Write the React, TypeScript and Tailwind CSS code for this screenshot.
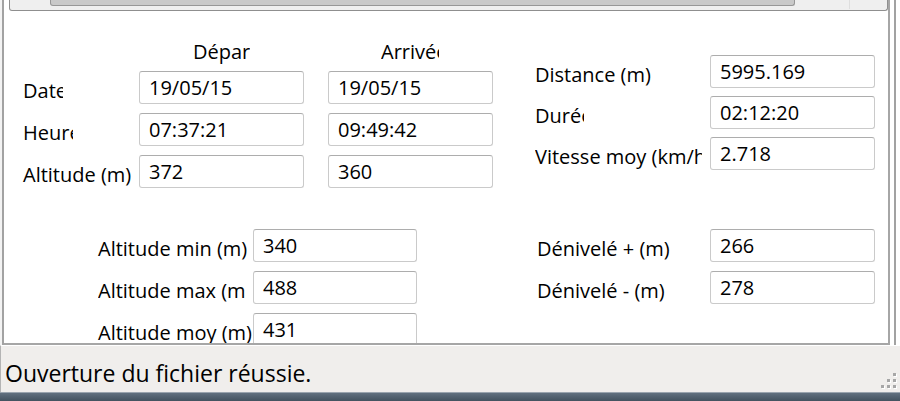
import React from 'react';

function Field({ value, className = 'w-[165px]' }: { value: string; className?: string }) {
  return (
    <div
      className={`relative z-10 flex h-[33px] shrink-0 items-center rounded-[3px] border border-[#cacaca] border-t-[#adadad] bg-white pl-[9px] leading-[24px] ${className}`}
    >
      {value}
    </div>
  );
}

function Grip() {
  const dots = [
    [12, 0],
    [6, 6],
    [12, 6],
    [0, 12],
    [6, 12],
    [12, 12],
  ];
  return (
    <svg className="absolute bottom-[3px] right-[3px]" width="16" height="16" viewBox="0 0 16 16">
      {dots.map(([x, y]) => (
        <g key={`${x}-${y}`}>
          <rect x={x + 1} y={y + 1} width="3" height="3" fill="#ffffff" />
          <rect x={x} y={y} width="3" height="3" fill="#a7a7a7" />
        </g>
      ))}
    </svg>
  );
}

export default function App() {
  return (
    <div className="flex h-[401px] w-[900px] flex-col overflow-hidden bg-white font-['Open_Sans','Noto_Sans',sans-serif] text-[20px] text-black">
      {/* form panel */}
      <div className="flex h-[345px] shrink-0">
        <div className="w-[2px] bg-[#f3f3f3]" />
        <div className="flex w-[894px] border-l-2 border-r-2 border-[#a2a2a2]">
          <div className="flex w-[886px] flex-col overflow-hidden border-b-2 border-r-2 border-[#a6a6a6] bg-white">
            {/* top scrollbar strip */}
            <div className="ml-[5px] flex h-[11px] w-[879px] shrink-0 rounded-b-[3px] border-x border-b border-[#8f8f8f] bg-[#efefef]">
              <div className="ml-[40px] h-[6px] w-[745px] rounded-b-[3px] border-x border-b border-[#979797] bg-[#c9c9c9]" />
              <div className="ml-[54px] h-[9px] w-px bg-[#dedede]" />
            </div>

            {/* depart / arrivee + totals */}
            <div className="flex shrink-0">
              <div className="ml-[19px] flex flex-col">
                <div className="flex h-[60px]">
                  <span className="ml-[170px] mt-[29px] h-[24px] w-[57px] overflow-hidden whitespace-nowrap leading-[24px]">
                    Départ
                  </span>
                  <span className="ml-[131px] mt-[29px] h-[24px] w-[58px] overflow-hidden whitespace-nowrap leading-[24px]">
                    Arrivée
                  </span>
                </div>
                <div className="flex flex-col gap-[9px]">
                  <div className="flex h-[33px] items-center">
                    <div className="w-[116px]">
                      <span className="mt-[6px] block w-[40px] overflow-hidden whitespace-nowrap leading-[24px]">Date</span>
                    </div>
                    <Field value="19/05/15" />
                    <Field value="19/05/15" className="ml-[24px] w-[165px]" />
                  </div>
                  <div className="flex h-[33px] items-center">
                    <div className="w-[116px]">
                      <span className="mt-[6px] block w-[50px] overflow-hidden whitespace-nowrap leading-[24px]">Heure</span>
                    </div>
                    <Field value="07:37:21" />
                    <Field value="09:49:42" className="ml-[24px] w-[165px]" />
                  </div>
                  <div className="flex h-[33px] items-center">
                    <div className="w-[116px]">
                      <span className="mt-[6px] block whitespace-nowrap leading-[24px]">Altitude (m)</span>
                    </div>
                    <Field value="372" />
                    <Field value="360" className="ml-[24px] w-[165px]" />
                  </div>
                </div>
              </div>

              <div className="ml-[42px] flex flex-col gap-[8px] pt-[44px]">
                <div className="flex h-[33px] items-center">
                  <div className="w-[175px]">
                    <span className="mt-[6px] block whitespace-nowrap leading-[24px]">Distance (m)</span>
                  </div>
                  <Field value="5995.169" />
                </div>
                <div className="flex h-[33px] items-center">
                  <div className="w-[175px]">
                    <span className="mt-[6px] block w-[49px] overflow-hidden whitespace-nowrap leading-[24px]">Durée</span>
                  </div>
                  <Field value="02:12:20" />
                </div>
                <div className="flex h-[33px] items-center">
                  <div className="w-[175px]">
                    <span className="mt-[6px] block w-[167px] overflow-hidden whitespace-nowrap leading-[24px]">
                      Vitesse moy (km/h)
                    </span>
                  </div>
                  <Field value="2.718" />
                </div>
              </div>
            </div>

            {/* altitude stats + denivele */}
            <div className="mt-[41px] flex shrink-0">
              <div className="ml-[94px] flex flex-col gap-[9px]">
                <div className="flex h-[33px] items-center">
                  <div className="w-[155px]">
                    <span className="mt-[6px] block whitespace-nowrap leading-[24px]">Altitude min (m)</span>
                  </div>
                  <Field value="340" className="w-[164px]" />
                </div>
                <div className="flex h-[33px] items-center">
                  <div className="w-[155px]">
                    <span className="mt-[6px] block w-[148px] overflow-hidden whitespace-nowrap leading-[24px]">
                      Altitude max (m)
                    </span>
                  </div>
                  <Field value="488" className="w-[164px]" />
                </div>
                <div className="flex h-[33px] items-center">
                  <div className="w-[155px]">
                    <span className="mt-[6px] block whitespace-nowrap leading-[24px]">Altitude moy (m)</span>
                  </div>
                  <Field value="431" className="w-[164px]" />
                </div>
              </div>

              <div className="ml-[120px] flex flex-col gap-[9px]">
                <div className="flex h-[33px] items-center">
                  <div className="w-[173px]">
                    <span className="mt-[6px] block whitespace-nowrap leading-[24px]">Dénivelé + (m)</span>
                  </div>
                  <Field value="266" />
                </div>
                <div className="flex h-[33px] items-center">
                  <div className="w-[173px]">
                    <span className="mt-[6px] block whitespace-nowrap leading-[24px]">Dénivelé - (m)</span>
                  </div>
                  <Field value="278" />
                </div>
              </div>
            </div>
          </div>
        </div>
        <div className="flex-1 bg-white" />
      </div>

      {/* status bar */}
      <div className="relative h-[47px] shrink-0 border-l border-t border-l-[#b4b4b4] border-t-white bg-[#f0eeec] pl-[4px] pt-[12px] text-[23px] leading-[30px]">
        Ouverture du fichier réussie.
        <Grip />
      </div>

      {/* window frame below */}
      <div className="h-[9px] shrink-0 border-t border-[#9aa4ae] bg-gradient-to-b from-[#61707f] to-[#43525f]" />
    </div>
  );
}
